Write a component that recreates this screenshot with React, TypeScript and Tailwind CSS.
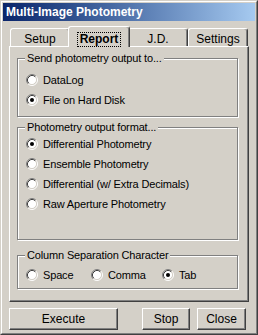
import { useState } from "react";

const font = { fontFamily: '"Liberation Sans", Arial, sans-serif' };

const Radio = ({ checked }: { checked: boolean }) => (
  <svg width="12" height="12" viewBox="0 0 12 12" className="shrink-0">
    <circle cx="6" cy="6" r="4.5" fill="#ffffff" />
    <path d="M2.11 9.89 A5.5 5.5 0 0 1 9.89 2.11" stroke="#808080" fill="none" />
    <path d="M9.89 2.11 A5.5 5.5 0 0 1 2.11 9.89" stroke="#ffffff" fill="none" />
    <path d="M2.82 9.18 A4.5 4.5 0 0 1 9.18 2.82" stroke="#404040" fill="none" />
    <path d="M9.18 2.82 A4.5 4.5 0 0 1 2.82 9.18" stroke="#d4d0c8" fill="none" />
    {checked && <circle cx="6" cy="6" r="2" fill="#000000" />}
  </svg>
);

const Option = ({
  label,
  checked,
  onClick,
  className = "",
}: {
  label: string;
  checked: boolean;
  onClick: () => void;
  className?: string;
}) => (
  <div className={`flex items-center h-[20px] cursor-default ${className}`} onClick={onClick}>
    <Radio checked={checked} />
    <span className="ml-[5px] text-[11px] tracking-[-0.15px] text-black whitespace-nowrap">{label}</span>
  </div>
);

const Group = ({
  title,
  className,
  children,
}: {
  title: string;
  className: string;
  children: React.ReactNode;
}) => (
  <div
    className={`relative ml-[7px] w-[221px] border border-[#808080] shadow-[inset_1px_1px_0_#ffffff,1px_1px_0_#ffffff] ${className}`}
  >
    <span className="absolute left-[7px] -top-[8px] px-[2px] bg-[#d4d0c8] text-[11px] tracking-[-0.15px] leading-[14px] text-black whitespace-nowrap">
      {title}
    </span>
    {children}
  </div>
);

const Tab = ({ label, active }: { label: string; active?: boolean }) =>
  active ? (
    <div className="relative z-10 w-[62px] h-[21px] -mb-[1px] -mx-[2px] bg-[#d4d0c8] border-l border-t border-r border-l-white border-t-white border-r-[#404040] rounded-t-[3px] shadow-[inset_-1px_0_#808080] flex items-center justify-center pt-[4px]">
      <span className="text-[12px] font-bold leading-[12px] px-[2px] pb-[1px] outline-1 outline-dotted outline-black">
        {label}
      </span>
    </div>
  ) : (
    <div className="w-[60px] h-[18px] bg-[#d4d0c8] border-l border-t border-r border-l-white border-t-white border-r-[#404040] rounded-t-[3px] shadow-[inset_-1px_0_#808080] flex items-center justify-center pt-[2px]">
      <span className="text-[12px] leading-[12px]">{label}</span>
    </div>
  );

const Button = ({ label, className }: { label: string; className: string }) => (
  <button
    className={`h-[22px] bg-[#d4d0c8] border border-t-white border-l-white border-r-[#404040] border-b-[#404040] shadow-[inset_-1px_-1px_0_#808080] text-[12px] text-black ${className}`}
  >
    {label}
  </button>
);

export default function App() {
  const [dest, setDest] = useState("file");
  const [format, setFormat] = useState("diff");
  const [sep, setSep] = useState("tab");

  return (
    <div style={font} className="w-[258px] h-[335px] bg-[#d4d0c8] border border-t-[#d4d0c8] border-l-[#d4d0c8] border-r-[#404040] border-b-[#404040]">
      <div className="h-full border border-t-white border-l-white border-r-[#808080] border-b-[#808080] p-[1px] flex flex-col">
        {/* title bar */}
        <div className="h-[18px] bg-gradient-to-r from-[#0a246a] to-[#a6caf0] flex items-center pl-[3px]">
          <span className="text-white font-bold text-[12px] leading-none">Multi-Image Photometry</span>
        </div>

        {/* tabs */}
        <div className="flex items-end h-[20px] mt-[5px] pl-[7px]">
          <Tab label="Setup" />
          <Tab label="Report" active />
          <Tab label="J.D." />
          <Tab label="Settings" />
        </div>

        {/* tab panel */}
        <div className="ml-[6px] w-[240px] h-[256px] border border-t-white border-l-white border-r-[#404040] border-b-[#404040] shadow-[inset_-1px_-1px_0_#808080] pt-[11px]">
          <Group title="Send photometry output to..." className="h-[59px] pt-[11px] pl-[8px]">
            <Option label="DataLog" checked={dest === "log"} onClick={() => setDest("log")} />
            <Option label="File on Hard Disk" checked={dest === "file"} onClick={() => setDest("file")} />
          </Group>

          <Group title="Photometry output format..." className="mt-[10px] h-[113px] pt-[6px] pl-[8px]">
            <Option label="Differential Photometry" checked={format === "diff"} onClick={() => setFormat("diff")} />
            <Option label="Ensemble Photometry" checked={format === "ens"} onClick={() => setFormat("ens")} />
            <Option label="Differential (w/ Extra Decimals)" checked={format === "extra"} onClick={() => setFormat("extra")} />
            <Option label="Raw Aperture Photometry" checked={format === "raw"} onClick={() => setFormat("raw")} />
          </Group>

          <Group title="Column Separation Character" className="mt-[15px] h-[34px] pt-[9px] pl-[8px]">
            <div className="flex">
              <Option label="Space" className="w-[65px]" checked={sep === "space"} onClick={() => setSep("space")} />
              <Option label="Comma" className="w-[71px]" checked={sep === "comma"} onClick={() => setSep("comma")} />
              <Option label="Tab" checked={sep === "tab"} onClick={() => setSep("tab")} />
            </div>
          </Group>
        </div>

        {/* buttons */}
        <div className="flex mt-[6px] pl-[6px]">
          <Button label="Execute" className="w-[109px]" />
          <Button label="Stop" className="w-[48px] ml-[24px]" />
          <Button label="Close" className="w-[49px] ml-[7px]" />
        </div>
      </div>
    </div>
  );
}
